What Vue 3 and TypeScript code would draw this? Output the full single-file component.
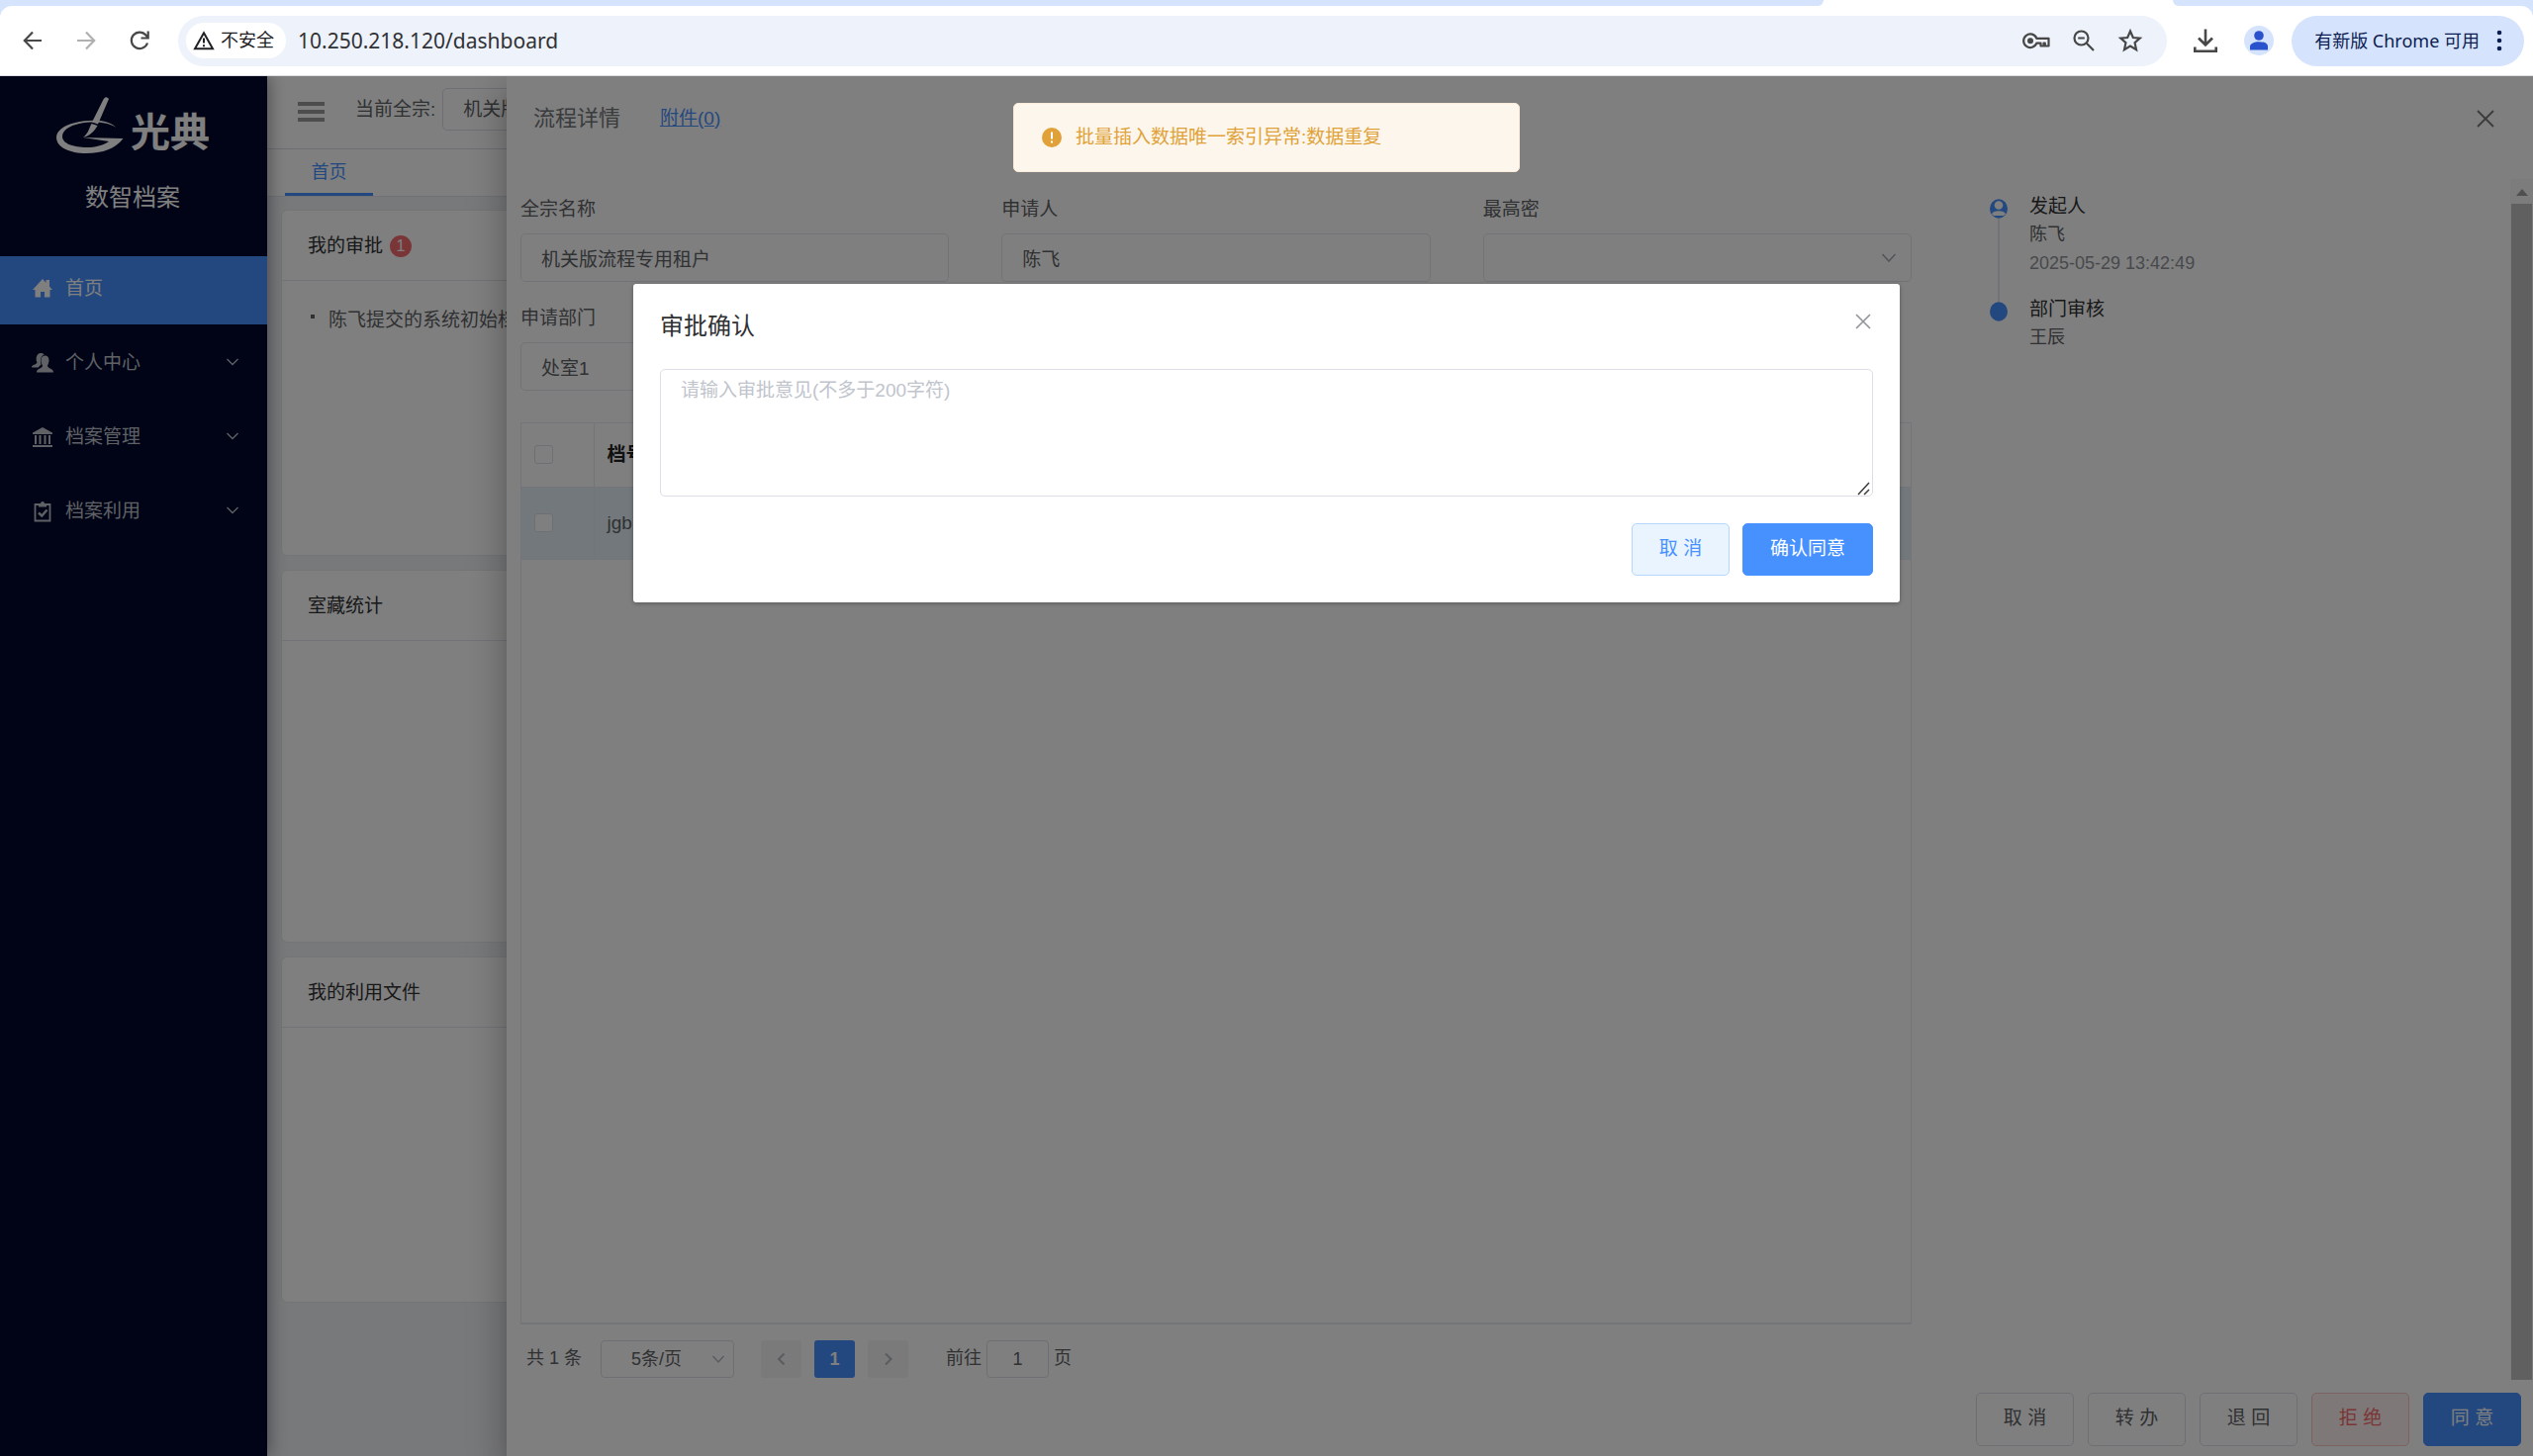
<script setup lang="ts">
import { ref } from 'vue'

interface MenuItem {
  label: string
  icon: 'home' | 'people' | 'bank' | 'clipboard'
  expandable: boolean
}

const menu: MenuItem[] = [
  { label: '首页', icon: 'home', expandable: false },
  { label: '个人中心', icon: 'people', expandable: true },
  { label: '档案管理', icon: 'bank', expandable: true },
  { label: '档案利用', icon: 'clipboard', expandable: true },
]

const url = ref('10.250.218.120/dashboard')
const tenant = ref('机关版流程专用租户')
const applicant = ref('陈飞')
const department = ref('处室1')
const secrecy = ref('')
const opinion = ref('')
const pageSize = ref('5条/页')
const jumpTo = ref('1')
</script>

<template>
  <div class="screen">
    <header class="browser">
      <div class="tabstrip">
        <span class="strip-left"></span>
        <span class="strip-active"></span>
        <span class="strip-right"></span>
      </div>
      <div class="toolbar">
        <nav class="nav-buttons">
          <button class="icon-btn" aria-label="后退">
            <svg width="24" height="24" viewBox="0 0 24 24" fill="none" stroke="#474747" stroke-width="2.2"><path d="M21 12H4M12 3.5 3.800 12 12 20.500" /></svg>
          </button>
          <button class="icon-btn" aria-label="前进">
            <svg width="24" height="24" viewBox="0 0 24 24" fill="none" stroke="#b0b0b0" stroke-width="2.200"><path d="M3 12h17M12 3.500 20.200 12 12 20.500" /></svg>
          </button>
          <button class="icon-btn" aria-label="重新加载">
            <svg width="24" height="24" viewBox="0 0 24 24" fill="none" stroke="#474747" stroke-width="2.200"><path d="M20 14.500A8.300 8.300 0 1 1 18.500 6.500L20.500 9M20.700 2.500V9.500H13.500" /></svg>
          </button>
        </nav>
        <div class="address">
          <button class="insecure">
            <svg width="22" height="20" viewBox="0 0 22 20" fill="none" stroke="#202124" stroke-width="2"><path d="M11 2.200 20 18.200H2Z" /><path d="M11 7.500v5M11 14.200v2" /></svg>
            <span>不安全</span>
          </button>
          <input v-model="url" class="url" aria-label="地址" />
          <div class="address-icons">
            <svg width="28" height="20" viewBox="0 0 28 20" fill="none" stroke="#474747" stroke-width="2.200"><path d="M14.300 7.800A6.800 6.800 0 1 0 14.300 12.600H18.500V15.500H21.500V12.600H22.800V15.500H26.500V7.800Z" stroke-linejoin="round" /><circle cx="8" cy="10.200" r="3" fill="#474747" stroke="none" /></svg>
            <svg width="24" height="24" viewBox="0 0 24 24" fill="none" stroke="#474747" stroke-width="2.200"><circle cx="9.500" cy="9.500" r="7" /><path d="M14.800 14.800 22 22M6.200 9.500h6.600" /></svg>
            <svg width="26" height="26" viewBox="0 0 24 24" fill="none" stroke="#474747" stroke-width="2"><path d="M12 3.200 14.600 9.200 21 9.800 16.200 14 17.600 20.500 12 17.100 6.400 20.500 7.800 14 3 9.800 9.400 9.200Z" /></svg>
          </div>
        </div>
        <button class="icon-btn download" aria-label="下载">
          <svg width="26" height="26" viewBox="0 0 26 26" fill="none" stroke="#474747" stroke-width="2.600"><path d="M13 1.500V17M6 10.500 13 17.500 20 10.500M2.300 19.500v4.200h21.400v-4.200" /></svg>
        </button>
        <button class="profile" aria-label="用户">
          <svg width="20" height="20" viewBox="0 0 20 20" fill="#2a52cc"><circle cx="10" cy="5" r="4.800" /><path d="M1 19.500V16c0-6.500 18-6.500 18 0v3.500Z" /></svg>
        </button>
        <button class="update">
          <span>有新版 Chrome 可用</span>
          <svg width="6" height="22" viewBox="0 0 6 22" fill="#0b1d51"><circle cx="3" cy="3" r="2.300" /><circle cx="3" cy="11" r="2.300" /><circle cx="3" cy="19" r="2.300" /></svg>
        </button>
      </div>
    </header>

    <div class="viewport">
      <div class="app">
        <aside class="sidebar">
          <div class="logo">
            <svg width="70" height="60" viewBox="0 0 70 60" fill="#fff">
              <path d="M61.500 32C52 23 34 24 20 27 7 30 1 36 1 42 1 52 15 58 31 58 48 58 61 53 68.500 43L28 42 54 46C48 50 40 52 32 52 18 52 7 48 7 41 7 35 14 30 24 28 38 25.500 52 26 61.500 32Z" />
              <path d="M48.500 3.500Q51-.5 54 3L43 28.500 37 26.500Z" />
              <path d="M36.500 28 42.500 30C39 36 35 40 28 42 33 38 34 33 36.500 28Z" />
            </svg>
            <strong>光典</strong>
          </div>
          <h1 class="product">数智档案</h1>
          <nav class="menu">
            <a v-for="(item, i) in menu" :key="item.label" href="#" class="menu-item" :class="{ active: i === 0 }">
              <svg v-if="item.icon === 'home'" class="menu-icon" viewBox="0 0 22 22"><path d="M11 1 21 12H18.500V19.500H13V14H9v5.500H3.500V12H1ZM14.500 2h3.500v7l-3.500-3.500Z" fill="currentColor" /></svg>
              <svg v-else-if="item.icon === 'people'" class="menu-icon" viewBox="0 0 22 22"><path d="M9 1c2 0 3 .5 3.500 1.500C9 4 8.500 8 9.500 12.500L6.500 15.500H0c0-3 4.500-2.500 5.500-5C3.500 7 5 1 9 1Z" fill="currentColor" /><path d="M13.500 3.500c4.500 0 5 6 2.500 10 0 3.500 6 2.500 6 7H5c0-4.500 6-3.500 6-7C8.500 9.500 9 3.500 13.500 3.500Z" fill="currentColor" /></svg>
              <svg v-else-if="item.icon === 'bank'" class="menu-icon" viewBox="0 0 22 22"><path d="M11 1 21 6.500V8H1V6.500ZM3 9h2v9H3ZM7.500 9h2v9h-2ZM12.500 9h2v9h-2ZM17 9h2v9h-2ZM1 19h20v2H1Z" fill="currentColor" /></svg>
              <svg v-else class="menu-icon" viewBox="0 0 22 22" fill="none" stroke="currentColor"><path d="M3.500 4h15v16.500h-15Z" stroke-width="1.800" /><path d="M7 3h2a2 2 0 0 1 4 0h2v3.500H7Z" fill="currentColor" stroke="none" /><path d="M7 12.500 10.300 15.500 15.500 9.500" stroke-width="2.400" /></svg>
              <span class="menu-label">{{ item.label }}</span>
              <svg v-if="item.expandable" width="14" height="14" viewBox="0 0 14 14" fill="none" stroke="currentColor" stroke-width="1.300"><path d="M1.500 3 7 8.500 12.500 3" /></svg>
            </a>
          </nav>
        </aside>

        <main class="main">
          <div class="topbar">
            <button class="icon-btn" aria-label="折叠菜单">
              <svg width="28" height="22" viewBox="0 0 28 22" fill="#9a9a9a"><path d="M0 0h27v4H0ZM0 8h27v4H0ZM0 16h27v4H0Z" /></svg>
            </button>
            <label for="tenant">当前全宗:</label>
            <select id="tenant" class="tenant"><option>机关版流程专用租户</option></select>
          </div>
          <div class="tabs"><a href="#" class="tab">首页</a></div>
          <div class="cards">
            <section class="card">
              <h2>我的审批<span class="badge">1</span></h2>
              <ul class="card-body short">
                <li><a href="#">陈飞提交的系统初始档</a></li>
              </ul>
            </section>
            <section class="card">
              <h2>室藏统计</h2>
              <div class="card-body tall"></div>
            </section>
            <section class="card">
              <h2>我的利用文件</h2>
              <div class="card-body short"></div>
            </section>
          </div>
        </main>
      </div>

      <section class="drawer">
        <header class="drawer-head">
          <h2>流程详情</h2>
          <a href="#">附件(0)</a>
          <button class="icon-btn" aria-label="关闭">
            <svg width="18" height="18" viewBox="0 0 18 18" fill="none" stroke="#72767b" stroke-width="1.800"><path d="M1 1 17 17M17 1 1 17" /></svg>
          </button>
        </header>

        <div class="drawer-body">
          <div class="pane">
            <form class="fields" @submit.prevent>
              <div class="field">
                <label for="f-tenant">全宗名称</label>
                <input id="f-tenant" v-model="tenant" readonly />
              </div>
              <div class="field">
                <label for="f-applicant">申请人</label>
                <input id="f-applicant" v-model="applicant" readonly />
              </div>
              <div class="field">
                <label for="f-secrecy">最高密</label>
                <div class="select-wrap">
                  <select id="f-secrecy" v-model="secrecy"><option value=""></option></select>
                  <svg width="16" height="16" viewBox="0 0 16 16" fill="none" stroke="#a8abb2" stroke-width="1.600"><path d="M1.500 4 8 11 14.500 4" /></svg>
                </div>
              </div>
              <div class="field">
                <label for="f-dept">申请部门</label>
                <input id="f-dept" v-model="department" readonly />
              </div>
            </form>

            <div class="table-box">
              <table>
                <thead>
                  <tr>
                    <th class="check"><input type="checkbox" aria-label="全选" /></th>
                    <th>档号</th>
                  </tr>
                </thead>
                <tbody>
                  <tr>
                    <td class="check"><input type="checkbox" aria-label="选择此行" /></td>
                    <td>jgb</td>
                  </tr>
                </tbody>
              </table>
            </div>

            <div class="pager">
              <span class="total">共 1 条</span>
              <div class="select-wrap size">
                <select v-model="pageSize" aria-label="每页条数"><option>5条/页</option></select>
                <svg width="14" height="14" viewBox="0 0 14 14" fill="none" stroke="#b4b7be" stroke-width="1.500"><path d="M1.500 5 7 11 12.500 5" /></svg>
              </div>
              <button class="page" aria-label="上一页">
                <svg width="10" height="14" viewBox="0 0 10 14" fill="none" stroke="#b4b7be" stroke-width="2"><path d="M7.500 1.500 2 7 7.500 12.500" /></svg>
              </button>
              <button class="page current">1</button>
              <button class="page" aria-label="下一页">
                <svg width="10" height="14" viewBox="0 0 10 14" fill="none" stroke="#b4b7be" stroke-width="2"><path d="M2 1.500 7.500 7 2 12.500" /></svg>
              </button>
              <label class="jump">前往<input v-model="jumpTo" />页</label>
            </div>
          </div>

          <ol class="timeline">
            <li>
              <svg class="node" width="18" height="20" viewBox="0 0 18 20"><ellipse cx="9" cy="10" rx="9" ry="9.700" fill="#4790ff" /><circle cx="9" cy="6.500" r="4.300" fill="#fff" /><path d="M2 15.500c1-4.500 13-4.500 14 0L14 17H4Z" fill="#fff" /></svg>
              <div>
                <h3>发起人</h3>
                <p>陈飞</p>
                <time>2025-05-29 13:42:49</time>
              </div>
            </li>
            <li>
              <svg class="node" width="18" height="20" viewBox="0 0 18 20"><ellipse cx="9" cy="10" rx="9" ry="9.700" fill="#4790ff" /></svg>
              <div>
                <h3>部门审核</h3>
                <p>王辰</p>
              </div>
            </li>
          </ol>

          <div class="scrollbar">
            <svg width="12" height="7" viewBox="0 0 12 7" fill="#a0a0a0"><path d="M6 0 12 7H0Z" /></svg>
            <span class="thumb"></span>
          </div>
        </div>

        <footer class="drawer-foot">
          <button class="btn">取 消</button>
          <button class="btn">转 办</button>
          <button class="btn">退 回</button>
          <button class="btn danger">拒 绝</button>
          <button class="btn primary">同 意</button>
        </footer>
      </section>

      <div class="mask">
        <section class="dialog" role="dialog" aria-labelledby="dialog-title">
          <header>
            <h2 id="dialog-title">审批确认</h2>
            <button class="icon-btn" aria-label="关闭">
              <svg width="16" height="16" viewBox="0 0 16 16" fill="none" stroke="#909399" stroke-width="1.600"><path d="M1 1 15 15M15 1 1 15" /></svg>
            </button>
          </header>
          <div class="opinion">
            <textarea v-model="opinion" aria-label="审批意见" placeholder="请输入审批意见(不多于200字符)"></textarea>
            <svg class="grip" width="13" height="14" viewBox="0 0 13 14" stroke="#3c3c3c" stroke-width="1.500"><path d="M1 13 12 1M7 13 12 8" /></svg>
          </div>
          <footer>
            <button class="btn plain">取 消</button>
            <button class="btn primary">确认同意</button>
          </footer>
        </section>
      </div>

      <div class="message" role="alert">
        <svg width="20" height="20" viewBox="0 0 20 20"><circle cx="10" cy="10" r="10" fill="#e0a238" /><path d="M10 4.500v7M10 13.500v2" stroke="#fff" stroke-width="2" /></svg>
        <p>批量插入数据唯一索引异常:数据重复</p>
      </div>
    </div>
  </div>
</template>

<style>
body {
  margin: 0;
}
</style>

<style scoped>
* {
  box-sizing: border-box;
}
.screen {
  display: flex;
  flex-direction: column;
  min-height: 100vh;
  font: 19px/26px "Liberation Sans", "Noto Sans CJK SC", sans-serif;
  color: #606266;
  background: #fff;
}
button,
input,
select,
textarea {
  font: inherit;
  color: inherit;
}
h1,
h2,
h3,
p,
ul,
ol {
  margin: 0;
  padding: 0;
  font-weight: inherit;
  list-style: none;
}
svg {
  display: block;
  flex: none;
}
a {
  color: inherit;
  text-decoration: none;
}
.icon-btn {
  display: block;
  padding: 0;
  border: 0;
  background: none;
}

/* browser chrome */
.browser {
  height: 77px;
  background: #d6e3fd;
}
.tabstrip {
  display: flex;
  height: 6px;
  background: #fff;
}
.strip-left {
  flex: 0 0 72%;
  background: #d6e3fd;
  border-bottom-right-radius: 6px;
}
.strip-active {
  flex: 1;
}
.strip-right {
  flex: 0 0 364px;
  background: #d6e3fd;
  border-bottom-left-radius: 10px;
}
.toolbar {
  display: flex;
  align-items: center;
  height: 71px;
  padding: 0 9px 0 21px;
  background: #fff;
  border-radius: 12px 12px 0 0;
  border-bottom: 1px solid #dcdde0;
}
.nav-buttons {
  display: flex;
  gap: 30px;
  margin-right: 27px;
}
.address {
  flex: 1;
  display: flex;
  align-items: center;
  height: 51px;
  padding: 0 24px 0 8px;
  border-radius: 26px;
  background: #edf2fb;
}
.insecure {
  display: flex;
  align-items: center;
  gap: 6px;
  height: 36px;
  padding: 0 12px 0 7px;
  border: 0;
  border-radius: 18px;
  background: #fff;
  font-size: 18px;
  color: #202124;
}
.url {
  flex: 1;
  min-width: 0;
  margin-left: 12px;
  padding: 0;
  border: 0;
  background: none;
  outline: 0;
  font: 21px/28px "Noto Sans", sans-serif;
  color: #303134;
}
.address-icons {
  display: flex;
  align-items: center;
  gap: 22px;
}
.download {
  margin-left: 26px;
}
.profile {
  display: flex;
  align-items: center;
  justify-content: center;
  width: 30px;
  height: 30px;
  margin: 0 18px 0 26px;
  padding: 0;
  border: 0;
  border-radius: 50%;
  background: #d6e3fd;
}
.update {
  display: flex;
  align-items: center;
  gap: 17px;
  height: 51px;
  padding: 0 22px 0 23px;
  border: 0;
  border-radius: 26px;
  background: #d6e3fd;
  font: 18px/24px "Noto Sans", "Noto Sans CJK SC", sans-serif;
  color: #0b1d51;
}

/* application shell */
.viewport {
  position: relative;
  flex: 1;
  display: flex;
  overflow: hidden;
}
.app {
  flex: 1;
  display: flex;
  min-width: 0;
}
.sidebar {
  position: relative;
  flex: 0 0 270px;
  background: #00082c;
  color: #bfc3cb;
  box-shadow: 2px 0 16px rgba(0, 0, 20, 0.4);
}
.logo {
  display: flex;
  align-items: flex-end;
  gap: 6px;
  height: 80px;
  padding-left: 56px;
  color: #fff;
}
.logo strong {
  font: 700 40px/52px "Noto Sans CJK SC", sans-serif;
}
.product {
  margin-top: 25px;
  padding-right: 2px;
  text-align: center;
  font-size: 24px;
  line-height: 36px;
  color: #fff;
}
.menu {
  display: flex;
  flex-direction: column;
  gap: 6px;
  margin-top: 41px;
}
.menu-item {
  display: flex;
  align-items: center;
  height: 69px;
  padding: 0 28px 3px 32px;
}
.menu-item.active {
  background: #4791ff;
  color: #fff;
}
.menu-icon {
  width: 22px;
  height: 22px;
  margin-right: 12px;
}
.menu-label {
  flex: 1;
}
.main {
  flex: 1;
  min-width: 0;
  background: #f0f2f5;
}
.topbar {
  display: flex;
  height: 74px;
  padding: 12px 31px;
  background: #fff;
  border-bottom: 1px solid #d8dce5;
}
.topbar label {
  margin: 9px 7px 0 30px;
  line-height: 26px;
}
.tenant {
  appearance: none;
  width: 260px;
  height: 43px;
  padding: 0 20px;
  border: 1px solid #dcdfe6;
  border-radius: 5px;
  background: #fff;
}
.tabs {
  display: flex;
  height: 48px;
  padding-left: 18px;
  background: #fff;
  border-bottom: 1px solid #e0e4ec;
}
.tab {
  width: 89px;
  height: 47px;
  text-align: center;
  font-size: 18px;
  line-height: 47px;
  border-bottom: 3px solid #4791ff;
  color: #4791ff;
}
.cards {
  display: flex;
  flex-direction: column;
  gap: 16px;
  padding: 14px 15px;
}
.card {
  background: #fff;
  border-radius: 5px;
  box-shadow: 0 0 2px rgba(0, 0, 0, 0.12);
}
.card h2 {
  display: flex;
  align-items: center;
  gap: 7px;
  height: 71px;
  padding: 1px 26px 0;
  border-bottom: 1px solid #e4e7ed;
  font-size: 19px;
  color: #303133;
}
.badge {
  width: 22px;
  height: 22px;
  border-radius: 11px;
  background: #f56c6c;
  text-align: center;
  font-size: 16px;
  line-height: 22px;
  color: #fff;
}
.card-body {
  padding: 27px 29px;
}
.short {
  height: 277px;
}
.tall {
  height: 304px;
}
.card-body li {
  display: flex;
  gap: 14px;
  white-space: nowrap;
}
.card-body li::before {
  content: "";
  width: 4px;
  height: 4px;
  margin-top: 7px;
  background: #606266;
}

/* drawer */
.drawer {
  position: absolute;
  top: 0;
  right: 0;
  bottom: 0;
  width: 80%;
  display: flex;
  flex-direction: column;
  background: #fff;
  box-shadow: 0 10px 13px -6px rgba(0, 0, 0, 0.2), 0 20px 31px 3px rgba(0, 0, 0, 0.14), 0 8px 38px 7px rgba(0, 0, 0, 0.12);
}
.drawer-head {
  display: flex;
  align-items: center;
  height: 104px;
  padding: 0 39px 19px 27px;
}
.drawer-head h2 {
  font-size: 22px;
  line-height: 30px;
  color: #72767b;
}
.drawer-head a {
  margin-left: 40px;
  text-decoration: underline;
  color: #4791ff;
}
.drawer-head button {
  margin-left: auto;
}
.drawer-body {
  flex: 1;
  display: flex;
}
.pane {
  flex: 1;
  display: flex;
  flex-direction: column;
  padding: 18px 0 2px 14px;
}
.fields {
  display: grid;
  grid-template-columns: repeat(3, 1fr);
  gap: 24px 53px;
}
.field label {
  display: block;
  margin-bottom: 11px;
}
.field input,
.field select {
  display: block;
  width: 100%;
  height: 49px;
  padding: 0 20px;
  border: 1px solid #e4e7ed;
  border-radius: 5px;
  outline: 0;
  background: #fff;
}
.select-wrap {
  position: relative;
}
.select-wrap select {
  appearance: none;
}
.select-wrap svg {
  position: absolute;
  top: 50%;
  right: 15px;
  margin-top: -8px;
  pointer-events: none;
}
.table-box {
  flex: 1;
  margin-top: 32px;
  border: 1px solid #e8eaf2;
  border-bottom-width: 2px;
}
table {
  width: 100%;
  border-collapse: collapse;
}
th,
td {
  height: 64px;
  padding: 0 13px;
  text-align: left;
  border-bottom: 1px solid #e8eaf2;
}
th {
  color: #222;
}
td {
  height: 73px;
}
.check {
  width: 73px;
  border-right: 1px solid #e8eaf2;
}
tbody tr {
  background: #e5f1f8;
}
.check input {
  appearance: none;
  display: block;
  width: 19px;
  height: 19px;
  margin: 0;
  border: 1px solid #dcdfe6;
  border-radius: 3px;
  background: #fff;
}
.pager {
  display: flex;
  height: 38px;
  margin-top: 16px;
  padding-left: 6px;
  font-size: 18px;
  line-height: 36px;
}
.total {
  width: 75px;
}
.size {
  width: 135px;
  margin-right: 27px;
}
.size select {
  width: 100%;
  height: 38px;
  padding: 0 0 0 30px;
  border: 1px solid #dcdfe6;
  border-radius: 4px;
  background: #fff;
}
.size svg {
  right: 9px;
}
.page {
  display: flex;
  align-items: center;
  justify-content: center;
  width: 41px;
  height: 38px;
  margin-right: 13px;
  padding: 0;
  border: 0;
  border-radius: 3px;
  background: #f4f4f5;
}
.page.current {
  background: #4791ff;
  color: #fff;
  font-weight: 700;
}
.jump {
  display: flex;
  margin-left: 25px;
}
.jump input {
  width: 63px;
  height: 38px;
  margin: 0 5px;
  border: 1px solid #dcdfe6;
  border-radius: 4px;
  text-align: center;
}
.timeline {
  flex: 0 0 526px;
  margin-left: 79px;
  padding-top: 13px;
}
.timeline li {
  position: relative;
  display: flex;
  gap: 22px;
  min-height: 104px;
}
.node {
  margin-top: 7px;
}
.timeline li:first-child::before {
  content: "";
  position: absolute;
  top: 27px;
  bottom: -7px;
  left: 8px;
  width: 2px;
  background: #e4e7ed;
}
.timeline h3 {
  font-size: 19px;
  line-height: 29px;
  color: #303133;
}
.timeline p,
.timeline time {
  display: block;
  font-size: 18px;
  line-height: 29px;
}
.timeline time {
  color: #909399;
}
.scrollbar {
  display: flex;
  flex-direction: column;
  align-items: center;
  width: 23px;
  padding-top: 10px;
  background: #f8f8f8;
}
.thumb {
  flex: 1;
  width: 21px;
  margin-top: 8px;
  background: #c1c1c1;
}
.drawer-foot {
  display: flex;
  justify-content: flex-end;
  gap: 14px;
  height: 77px;
  padding: 13px 12px 0;
}
.btn {
  min-width: 99px;
  height: 54px;
  padding: 0 26px 2px;
  border: 1px solid #dcdfe6;
  border-radius: 5px;
  background: #fff;
}
.btn.danger {
  border-color: #fbc4c4;
  background: #fef0f0;
  color: #f56c6c;
}
.btn.primary {
  border-color: #4791ff;
  background: #4791ff;
  color: #fff;
}
.btn.plain {
  border-color: #b5d6ff;
  background: #e9f4ff;
  color: #4791ff;
}

/* modal */
.mask {
  position: absolute;
  inset: 0;
  display: flex;
  justify-content: center;
  align-items: flex-start;
  padding-top: 210px;
  background: rgba(0, 0, 0, 0.5);
}
.dialog {
  width: 50%;
  padding: 27px;
  border-radius: 3px;
  background: #fff;
  box-shadow: 0 1px 4px rgba(0, 0, 0, 0.3);
}
.dialog header {
  display: flex;
  justify-content: space-between;
  margin-bottom: 27px;
}
.dialog h2 {
  font-size: 24px;
  line-height: 32px;
  color: #303133;
}
.dialog header button {
  align-self: flex-start;
  margin: 3px 2px 0;
}
.opinion {
  position: relative;
}
.opinion textarea {
  display: block;
  width: 100%;
  height: 129px;
  padding: 8px 20px;
  border: 1px solid #dcdfe6;
  border-radius: 5px;
  outline: 0;
  resize: none;
}
.opinion textarea::placeholder {
  color: #c0c4cc;
}
.grip {
  position: absolute;
  right: 3px;
  bottom: 1px;
}
.dialog footer {
  display: flex;
  justify-content: flex-end;
  gap: 13px;
  margin-top: 27px;
}
.dialog .btn {
  height: 53px;
}
.dialog .btn.primary {
  min-width: 132px;
}
.message {
  position: absolute;
  top: 27px;
  left: 50%;
  transform: translateX(-50%);
  display: flex;
  align-items: center;
  gap: 14px;
  width: 20%;
  height: 70px;
  padding: 0 28px;
  border: 1px solid #faecd8;
  border-radius: 5px;
  background: #fdf6ec;
  color: #e0a238;
}
</style>
